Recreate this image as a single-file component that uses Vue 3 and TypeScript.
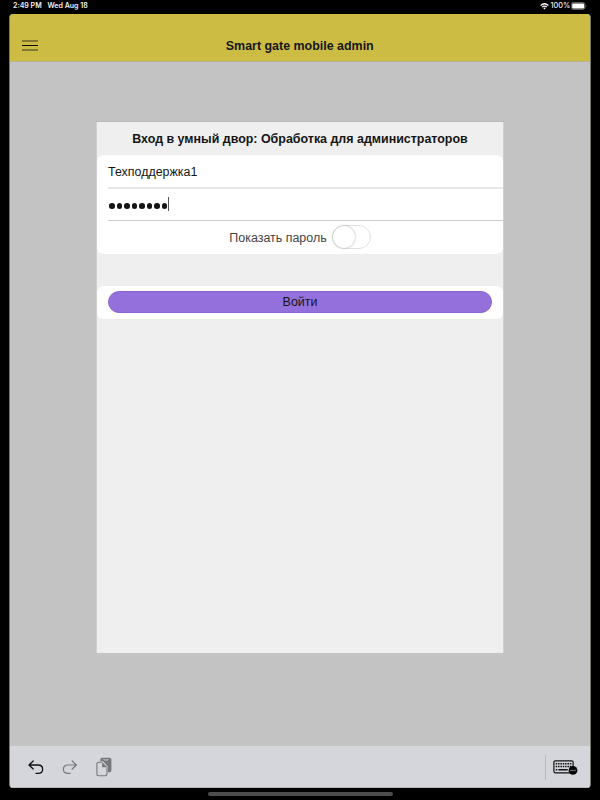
<script setup lang="ts">
import { ref } from 'vue'

const login = ref<string>('Техподдержка1')
const passwordLength = ref<number>(8)
const showPassword = ref<boolean>(false)
</script>

<template>
  <div class="device">
    <header class="status">
      <span class="time">2:49 PM</span>
      <span class="date">Wed Aug 18</span>
      <svg class="wifi" width="9" height="7" viewBox="0 0 9 7" fill="none" stroke="#fff" stroke-width="1.2">
        <path d="M.6 2.5Q4.5-1 8.4 2.5M2.1 4.1Q4.5 2 6.9 4.1" />
        <path d="M3.2 5.1Q4.5 4.1 5.8 5.1L4.5 6.5Z" fill="#fff" stroke="none" />
      </svg>
      <span class="percent">100%</span>
      <svg class="battery" width="16" height="8" viewBox="0 0 16 8">
        <rect x=".4" y=".6" width="13.6" height="6.8" rx="2" fill="#222" stroke="#888" stroke-width=".7" />
        <rect x="1.2" y="1.4" width="12" height="5.2" rx="1.3" fill="#fff" />
        <path d="M14.9 2.8Q16 4 14.9 5.2Z" fill="#888" />
      </svg>
    </header>

    <div class="window">
      <nav class="navbar">
        <svg class="menu" width="16" height="12" viewBox="0 0 16 12">
          <path d="M0 1h16M0 10h16" stroke="#82782e" stroke-width="2" />
          <path d="M0 5.5h16" stroke="#080802" />
        </svg>
        <h1>Smart gate mobile admin</h1>
      </nav>

      <main class="content">
        <section class="dialog">
          <h2>Вход в умный двор: Обработка для администраторов</h2>
          <div class="group">
            <div class="row login">{{ login }}</div>
            <div class="row password">
              <i v-for="n in passwordLength" :key="n" class="dot"></i>
              <i class="caret"></i>
            </div>
            <div class="toggle-row" @click="showPassword = !showPassword">
              <span class="label">Показать пароль</span>
              <span class="switch" :class="{ on: showPassword }"><i class="knob"></i></span>
            </div>
          </div>
          <div class="group action">
            <button type="button">Войти</button>
          </div>
        </section>
      </main>

      <footer class="toolbar">
        <svg class="undo" width="16" height="15" viewBox="0 0 16 15" fill="none" stroke="#111" stroke-width="1.3" stroke-linecap="round" stroke-linejoin="round">
          <path d="M5.2 1L1 5L5.2 9M1.2 5H10C16.2 5 16.2 13.4 10 13.4H8" />
        </svg>
        <svg class="redo" width="16" height="15" viewBox="0 0 16 15" fill="none" stroke="#77787b" stroke-width="1.2" stroke-linecap="round" stroke-linejoin="round">
          <path d="M10.2 1L14.4 5L10.2 9M14.2 5H6C-.2 5-.2 13.4 6 13.4H8" />
        </svg>
        <svg class="paste" width="17" height="20" viewBox="0 0 17 20">
          <path d="M6 .8H13.7Q15.4.8 15.4 2.5V13.6Q15.4 15.3 13.7 15.3H11.9V9.8L7 4.2H4.3V2.5Q4.3.8 6 .8Z" fill="#77787c" />
          <path d="M7.7 2.1Q7.7 3 8.6 3H11.3Q12.2 3 12.2 2.1" fill="none" stroke="#d5d6dc" stroke-width=".9" />
          <path d="M6 5.2H2.4Q.9 5.2.9 6.8V17Q.9 18.7 2.4 18.7H9.4Q11 18.7 11 17V10.3" fill="none" stroke="#77787c" stroke-width="1.1" />
          <path d="M6.1 5V10.3H11.2Z" fill="#77787c" />
        </svg>
        <i class="divider"></i>
        <svg class="keyboard" width="25" height="16" viewBox="0 0 25 16">
          <rect x=".9" y=".8" width="19.2" height="12" rx="1.5" fill="none" stroke="#111" stroke-width="1.2" />
          <path d="M2.7 3.8H18.5M2.7 6.5H18.5" stroke="#111" stroke-width="1.5" stroke-dasharray="1.5 .85" />
          <path d="M2.7 9.7H4.3M5.3 9.7H14.7" stroke="#111" stroke-width="1.6" />
          <circle cx="20" cy="10.4" r="4.4" fill="#080808" />
          <path d="M17.4 10.4h1.2M19.4 10.4h1.2M21.4 10.4h1.2" stroke="#bbb" stroke-width="1" />
        </svg>
      </footer>
    </div>

    <div class="home"><i></i></div>
  </div>
</template>

<style>
body {
  margin: 0;
  background: #000;
}
</style>

<style scoped>
.device {
  box-sizing: border-box;
  width: 600px;
  height: 800px;
  display: flex;
  flex-direction: column;
  background: #000;
  font-family: "Liberation Sans", Arial, sans-serif;
  color: #151515;
  overflow: hidden;
}
.status {
  height: 14px;
  box-sizing: border-box;
  padding: 0 13px 2px;
  display: flex;
  align-items: center;
  flex: none;
  font: 600 7.05px/12px Inter, "Liberation Sans", sans-serif;
  color: #f2f2f2;
  white-space: nowrap;
}
.time {
  width: 34.5px;
}
.wifi {
  margin-left: auto;
  margin-right: 2px;
}
.percent {
  width: 20.5px;
  font-weight: 500;
  font-size: 7.3px;
}
.window {
  box-sizing: border-box;
  margin: 0 9px;
  height: 773.7px;
  flex: none;
  display: flex;
  flex-direction: column;
  border: solid #77766c;
  border-width: 0 1px;
  border-radius: 4px;
  overflow: hidden;
  background: #c3c3c3;
}
.navbar {
  height: 48.4px;
  box-sizing: border-box;
  flex: none;
  display: grid;
  grid-template-columns: 28px 1fr 28px;
  padding: 25px 12.5px 0 12px;
  background: #cdbc43;
  border-bottom: 1px solid #b9b193;
}
.menu {
  margin-top: 1px;
}
h1 {
  margin: 0;
  text-align: center;
  font-size: 12.45px;
  line-height: 14px;
  color: #16161c;
}
.content {
  flex: 1;
  padding: 59.6px 86px 0;
}
.dialog {
  box-sizing: border-box;
  height: 531.5px;
  background: #efefef;
  border: solid #d0d0d0;
  border-width: 0 1px;
  box-shadow: 0 -1px 0 #bababa;
}
h2 {
  margin: 0;
  height: 33.5px;
  text-align: center;
  font-size: 12.45px;
  line-height: 34px;
  white-space: nowrap;
}
.group {
  background: #fff;
  border-radius: 6px;
  overflow: hidden;
  box-shadow: 0 0 1px #ddd;
}
.row {
  box-sizing: border-box;
  margin-left: 11px;
  display: flex;
  align-items: center;
  font-size: 12.45px;
}
.login {
  height: 33.5px;
  padding-top: 2px;
  border-bottom: 2px solid #e8e8e8;
}
.password {
  height: 32px;
  padding-left: 1px;
  gap: 2px;
  border-bottom: 1px solid #ccc;
}
.dot {
  width: 5.5px;
  height: 5.5px;
  margin-top: 3px;
  border-radius: 50%;
  background: #151515;
}
.caret {
  width: 1px;
  height: 14px;
  margin-left: -1.3px;
  background: #555;
}
.toggle-row {
  height: 33px;
  display: flex;
  align-items: center;
  justify-content: center;
  gap: 5px;
  font-size: 12.45px;
  color: #444;
}
.label {
  padding-top: 1px;
}
.switch {
  box-sizing: border-box;
  width: 39px;
  height: 24px;
  border: 1px solid #e0e0e0;
  border-radius: 12px;
  display: flex;
}
.knob {
  width: 22px;
  height: 22px;
  border-radius: 50%;
  background: #fff;
  box-shadow: 0 0 2px #999;
}
.on {
  justify-content: flex-end;
  background: #9370db;
}
.action {
  box-sizing: border-box;
  height: 33px;
  margin-top: 32px;
  padding: 5px 11px;
}
button {
  display: block;
  box-sizing: border-box;
  width: 100%;
  height: 22.5px;
  padding: 0;
  border: 1px solid #8962d3;
  border-radius: 12px;
  background: #9370db;
  font: 12.45px/20px "Liberation Sans", sans-serif;
  color: #151515;
}
.toolbar {
  height: 41.7px;
  box-sizing: border-box;
  flex: none;
  display: flex;
  align-items: flex-start;
  padding: 9px 12px 0 18px;
  background: #d5d6dc;
  border-bottom: 1px solid #b4b4b8;
}
.undo {
  margin-top: 5px;
}
.redo {
  margin: 5px 0 0 18px;
}
.paste {
  margin: 2px 0 0 18px;
}
.divider {
  width: 1px;
  height: 25px;
  margin-left: auto;
  margin-right: 7.5px;
  background: #b8b9be;
}
.keyboard {
  margin-top: 5px;
}
.home {
  flex: 1;
  display: flex;
  justify-content: center;
  padding-top: 4.5px;
}
.home i {
  width: 185px;
  height: 3.5px;
  border-radius: 2px;
  background: #4d4d4d;
}
</style>
